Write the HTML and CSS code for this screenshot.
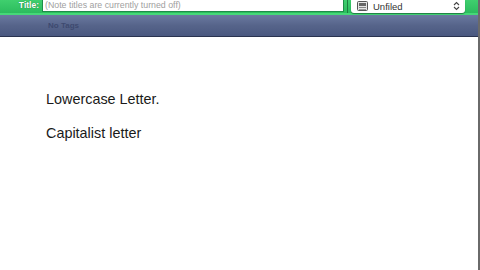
FILE: index.html
```html
<!DOCTYPE html>
<html>
<head>
<meta charset="utf-8">
<link rel="stylesheet" href="styles.css">
</head>
<body>
<div class="window">
  <div class="titlebar">
    <span class="label">Title:</span>
    <div class="field">(Note titles are currently turned off)</div>
    <div class="divider"></div>
    <div class="select">
      <svg class="nb" width="13" height="10" viewBox="0 0 13 10"><rect x="1.5" y="0.5" width="10" height="9" rx="1" fill="#e4e4e4" stroke="#555"/><rect x="3" y="2" width="7" height="3" fill="#666"/><rect x="3" y="6" width="7" height="1" fill="#888"/><rect x="3" y="8" width="7" height="1" fill="#999"/></svg>
      <span class="sel-text">Unfiled</span>
      <svg class="arrows" width="7" height="10" viewBox="0 0 7 10"><path d="M1 4 L3.5 1.5 L6 4 M1 6 L3.5 8.5 L6 6" fill="none" stroke="#444" stroke-width="1.1"/></svg>
    </div>
  </div>
  <div class="tagbar"><span class="tags">No Tags</span></div>
  <div class="note">
    <p>Lowercase Letter.</p>
    <p>Capitalist letter</p>
  </div>
</div>
</body>
</html>
```
FILE: styles.css
```css
html, body { margin: 0; padding: 0; }
body { width: 480px; height: 270px; overflow: hidden; background: #fff; font-family: "Liberation Sans", Arial, sans-serif; }
.window { display: flex; flex-direction: column; height: 270px; border-right: 2px solid #6a6a6a; box-sizing: border-box; }
.titlebar {
  height: 15px; display: flex; align-items: flex-start;
  background: linear-gradient(#3fcf6e, #2cbc5e);
  border-bottom: 2px solid #46d878; box-sizing: border-box;
}
.label { width: 42px; text-align: right; padding-right: 3px; color: #fff; font-weight: bold; font-size: 8.5px; line-height: 11px; box-sizing: border-box; text-shadow: 0 0 1px #1a6a36; }
.field {
  width: 302px; height: 12px; background: #fff; border: 1px solid #1e8d48; border-top: none;
  font-size: 8.8px; color: #a0a0a0; line-height: 11px; padding-left: 2px; box-sizing: border-box;
}
.divider { width: 1px; height: 13px; background: #1c7e40; margin-left: 3px; margin-right: 3px; }
.select {
  width: 114px; height: 13px; background: #fff; border-radius: 0 0 3px 3px; box-shadow: 0 1px 1px #1d7c40;
  display: flex; align-items: center; padding: 0 5px 1px 5px; box-sizing: border-box;
}
.nb { margin-right: 4px; }
.sel-text { font-size: 9.5px; color: #333; flex: 1; }
.tagbar {
  height: 22px; background: linear-gradient(#6a79a0, #56648a 50%, #4a5880);
  border-bottom: 1px solid #2a3350; box-sizing: border-box;
  display: flex; align-items: center;
}
.tags { margin-left: 48px; font-size: 8px; color: #3e4a70; font-weight: bold; }
.note { flex: 1; padding: 55px 0 0 46px; }
.note p { margin: 0 0 19px 0; font-size: 14.4px; line-height: 15px; color: #1a1a1a; }
```
